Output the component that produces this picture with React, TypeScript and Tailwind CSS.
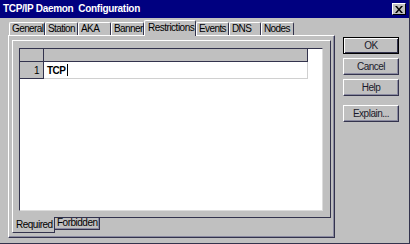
import React from "react";

const topTabs = [
  { label: "General", w: "w-[36px]" },
  { label: "Station", w: "w-[33px]" },
  { label: "AKA", w: "w-[33px]" },
  { label: "Banner", w: "w-[33px]" },
  { label: "Restrictions", w: "w-[52px]", active: true },
  { label: "Events", w: "w-[33px]" },
  { label: "DNS", w: "w-[32px]" },
  { label: "Nodes", w: "w-[33px]" },
];

function TopTab({ label, w, active }: { label: string; w: string; active?: boolean }) {
  if (active) {
    return (
      <div
        className={`${w} h-[16px] relative z-10 -mb-px bg-[#c0c0c0] border-t border-l border-white border-r border-r-[#33334d] rounded-t-[2px] pl-[3px] pt-[1px] leading-[12px] whitespace-nowrap`}
      >
        {label}
      </div>
    );
  }
  return (
    <div
      className={`${w} h-[13px] bg-[#c0c0c0] border-t border-l border-white border-r border-r-[#33334d] rounded-t-[2px] pl-[2px] leading-[12px] tracking-[-0.6px] whitespace-nowrap`}
    >
      {label}
    </div>
  );
}

function Button({ children, isDefault }: { children: React.ReactNode; isDefault?: boolean }) {
  return (
    <div
      className={`w-[56px] h-[17px] flex items-center justify-center bg-[#c0c0c0] text-[#1a1a2a] ${
        isDefault
          ? "border border-black shadow-[inset_1px_1px_#ffffff,inset_-1px_-1px_#33334d]"
          : "border-t border-l border-white border-r border-b border-r-[#33334d] border-b-[#33334d] shadow-[inset_-1px_-1px_#8a8aa0]"
      }`}
    >
      {children}
    </div>
  );
}

export default function App() {
  return (
    <div className="w-[410px] h-[244px] bg-[#c0c0c0] flex flex-col border-r border-b border-[#33334d] font-['Liberation_Sans',Arial,sans-serif] text-[10px] tracking-[-0.5px] text-black overflow-hidden">
      {/* title bar */}
      <div className="h-[18px] bg-[#000080] flex items-center justify-between pl-[3px] pr-[3px]">
        <span className="text-white font-bold text-[10px] tracking-[-0.3px] whitespace-pre leading-none">TCP/IP Daemon  Configuration</span>
        <div className="w-[14px] h-[12px] bg-[#c0c0c0] border-t border-l border-white border-r border-b border-r-black border-b-black flex items-center justify-center">
          <svg width="8" height="7" viewBox="0 0 8 7">
            <path d="M0 0h2l2 2.5L6 0h2L5 3.5 8 7H6L4 4.5 2 7H0l3-3.5z" fill="black" />
          </svg>
        </div>
      </div>

      <div className="flex flex-row pl-[8px]">
        {/* outer tab control */}
        <div className="w-[327px] flex flex-col">
          <div className="h-[17px] flex items-end pl-[1px]">
            {topTabs.map((t) => (
              <TopTab key={t.label} {...t} />
            ))}
          </div>
          <div className="h-[203px] border-t border-l border-white border-r border-b border-r-[#33334d] border-b-[#33334d] shadow-[inset_-1px_-1px_#8a8aa0] pl-[3px] pt-[4px]">
            {/* inner tab control */}
            <div className="w-[319px] flex flex-col">
              <div className="h-[178px] border-t border-l border-white border-r border-b border-r-[#33334d] border-b-[#33334d] pl-[6px] pt-[7px]">
                {/* grid */}
                <div className="w-[304px] h-[163px] bg-white border-t border-l border-[#33334d] border-r border-b border-r-[#dcdcdc] border-b-[#dcdcdc]">
                  <div className="flex h-[13px]">
                    <div className="w-[24px] bg-[#c0c0c0] border-r border-b border-[#33334d]" />
                    <div className="w-[264px] bg-[#c0c0c0] border-r border-b border-[#33334d]" />
                  </div>
                  <div className="flex h-[17px]">
                    <div className="w-[24px] bg-[#c0c0c0] border-r border-b border-[#33334d] flex items-center justify-end pr-[4px]">
                      1
                    </div>
                    <div className="w-[264px] border-r border-b border-[#d0d0d0] flex items-center pl-[3px]">
                      <span className="font-bold">TCP</span>
                      <span className="w-px h-[12px] bg-black ml-px" />
                    </div>
                  </div>
                </div>
              </div>
              {/* bottom tabs */}
              <div className="flex items-start">
                <div className="w-[43px] h-[16px] -mt-px relative z-10 bg-[#c0c0c0] border-l border-white border-r border-b border-r-[#33334d] border-b-[#33334d] pl-[3px] pt-[2px] leading-[12px] whitespace-nowrap">
                  Required
                </div>
                <div className="w-[45px] h-[12px] border-r border-b border-[#33334d] bg-[#c0c0c0] pl-[2px] leading-[10px] whitespace-nowrap shadow-[inset_-1px_-1px_#8a8aa0]">
                  Forbidden
                </div>
              </div>
            </div>
          </div>
        </div>

        {/* buttons */}
        <div className="ml-[8px] pt-[19px] flex flex-col gap-[4px]">
          <Button isDefault>OK</Button>
          <Button>Cancel</Button>
          <Button>Help</Button>
          <div className="mt-[5px]">
            <Button>Explain...</Button>
          </div>
        </div>
      </div>
    </div>
  );
}
